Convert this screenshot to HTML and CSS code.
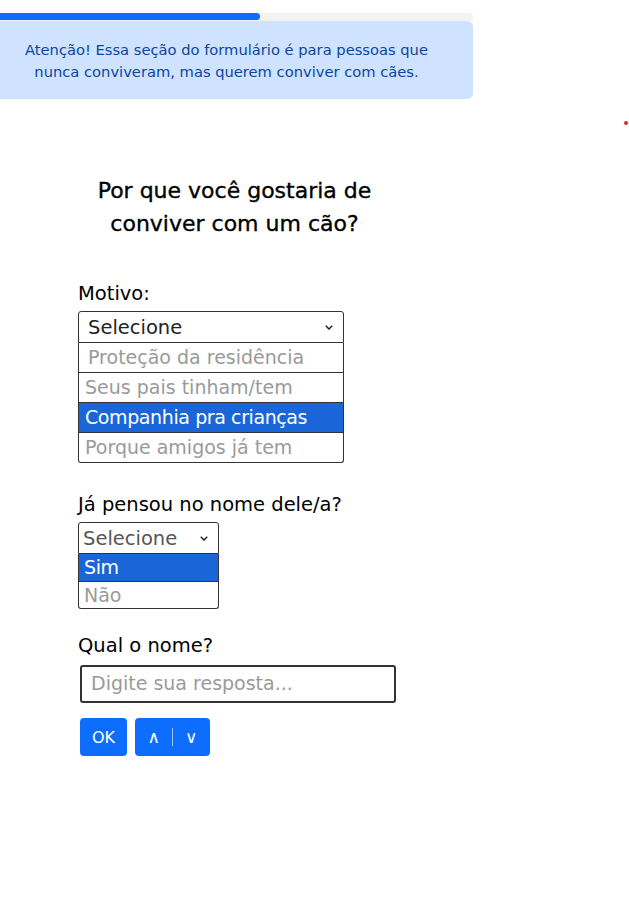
FILE: index.html
```html
<!DOCTYPE html>
<html lang="pt-BR">
<head>
<meta charset="utf-8">
<link rel="stylesheet" href="styles.css">
</head>
<body>
<div class="page">
  <div class="progress"><div class="progress-bar" style="width:55%"></div></div>
  <div class="alert">Atenção! Essa seção do formulário é para pessoas que nunca conviveram, mas querem conviver com cães.</div>
  <h1 class="title">Por que você gostaria de<br>conviver com um cão?</h1>
  <div class="form">
    <div class="field">
      <div class="label">Motivo:</div>
      <div class="dropdown wide">
        <div class="select"><span>Selecione</span><svg class="chev" viewBox="0 0 8 5" width="8" height="5"><path d="M0.8 0.8l3.2 3.2 3.2-3.2" fill="none" stroke="#222" stroke-width="1.5"/></svg></div>
        <div class="option indent">Proteção da residência</div>
        <div class="option">Seus pais tinham/tem</div>
        <div class="option active">Companhia pra crianças</div>
        <div class="option last">Porque amigos já tem</div>
      </div>
    </div>
    <div class="field second">
      <div class="label">Já pensou no nome dele/a?</div>
      <div class="dropdown narrow">
        <div class="select muted"><span>Selecione</span><svg class="chev" viewBox="0 0 8 5" width="8" height="5"><path d="M0.8 0.8l3.2 3.2 3.2-3.2" fill="none" stroke="#222" stroke-width="1.5"/></svg></div>
        <div class="option small active">Sim</div>
        <div class="option small last">Não</div>
      </div>
    </div>
    <div class="field third">
      <div class="label">Qual o nome?</div>
      <div class="input">Digite sua resposta...</div>
    </div>
    <div class="buttons">
      <button class="btn ok">OK</button>
      <button class="btn nav"><span>∧</span><span class="sep"></span><span>∨</span></button>
    </div>
  </div>
</div>
<div class="dot"></div>
</body>
</html>
```
FILE: styles.css
```css
* { box-sizing: border-box; }
body {
  margin: 0;
  font-family: "DejaVu Sans", sans-serif;
  background: #fff;
  color: #000;
}
.page {
  width: 473px;
}
.progress {
  margin-top: 13px;
  height: 8px;
  background: #f3f3f3;
  border-radius: 0 4px 0 0;
}
.progress-bar {
  height: 7px;
  margin-top: 1px;
  background: #0d6efd;
  border-radius: 0 4px 4px 0;
}
.alert {
  height: 78px;
  background: #cfe2ff;
  color: #0a46a0;
  font-size: 14.7px;
  line-height: 22px;
  text-align: center;
  padding: 18px 40px 0 20px;
  border-radius: 0 6px 6px 0;
}
.title {
  margin: 75px 0 0;
  text-align: center;
  font-size: 22px;
  font-weight: 500;
  line-height: 33px;
  padding-right: 4px;
  -webkit-text-stroke: 0.35px #000;
}
.form {
  padding-left: 78px;
  margin-top: 42px;
}
.label {
  font-size: 19.5px;
  line-height: 24px;
}
.field.second { margin-top: 30px; }
.field.third { margin-top: 25px; }
.dropdown { margin-top: 5px; }
.dropdown.wide { width: 266px; }
.dropdown.narrow { width: 141px; }
.select {
  display: flex;
  align-items: center;
  justify-content: space-between;
  height: 32px;
  border: 1px solid #333;
  border-radius: 3px 3px 0 0;
  padding: 0 10px 0 9px;
  font-size: 19.5px;
  color: #222;
}
.select.muted { color: #555; padding-left: 4px; }
.option {
  height: 30px;
  border: 1px solid #333;
  border-top: none;
  padding-left: 6px;
  font-size: 19px;
  line-height: 28px;
  color: #9a9a9a;
  white-space: nowrap;
}
.option.last { border-radius: 0 0 3px 3px; }
.option.indent { padding-left: 9px; }
.option.small { height: 27.5px; line-height: 26px; padding-left: 5px; }
.option.active { background: #1a66d8; color: #fff; letter-spacing: -0.4px; }
.input {
  margin-top: 7px;
  margin-left: 2px;
  width: 316px;
  height: 38px;
  border: 2px solid #333;
  border-radius: 3px;
  padding-left: 9px;
  font-size: 19px;
  line-height: 33px;
  color: #9a9a9a;
}
.buttons {
  display: flex;
  gap: 8px;
  margin-top: 15px;
  margin-left: 2px;
}
.btn {
  height: 38px;
  border: none;
  border-radius: 4px;
  background: #0d6efd;
  color: #fff;
  font-family: "DejaVu Sans", sans-serif;
  font-size: 16px;
  padding: 0;
}
.btn.ok { width: 47px; }
.btn.nav {
  width: 75px;
  display: flex;
  align-items: center;
  justify-content: center;
  gap: 12px;
  font-size: 17px;
}
.sep {
  width: 1px;
  height: 18px;
  background: rgba(255,255,255,0.6);
}
.dot {
  position: absolute;
  left: 624px;
  top: 121px;
  width: 4px;
  height: 4px;
  border-radius: 50%;
  background: #e32424;
}
```
